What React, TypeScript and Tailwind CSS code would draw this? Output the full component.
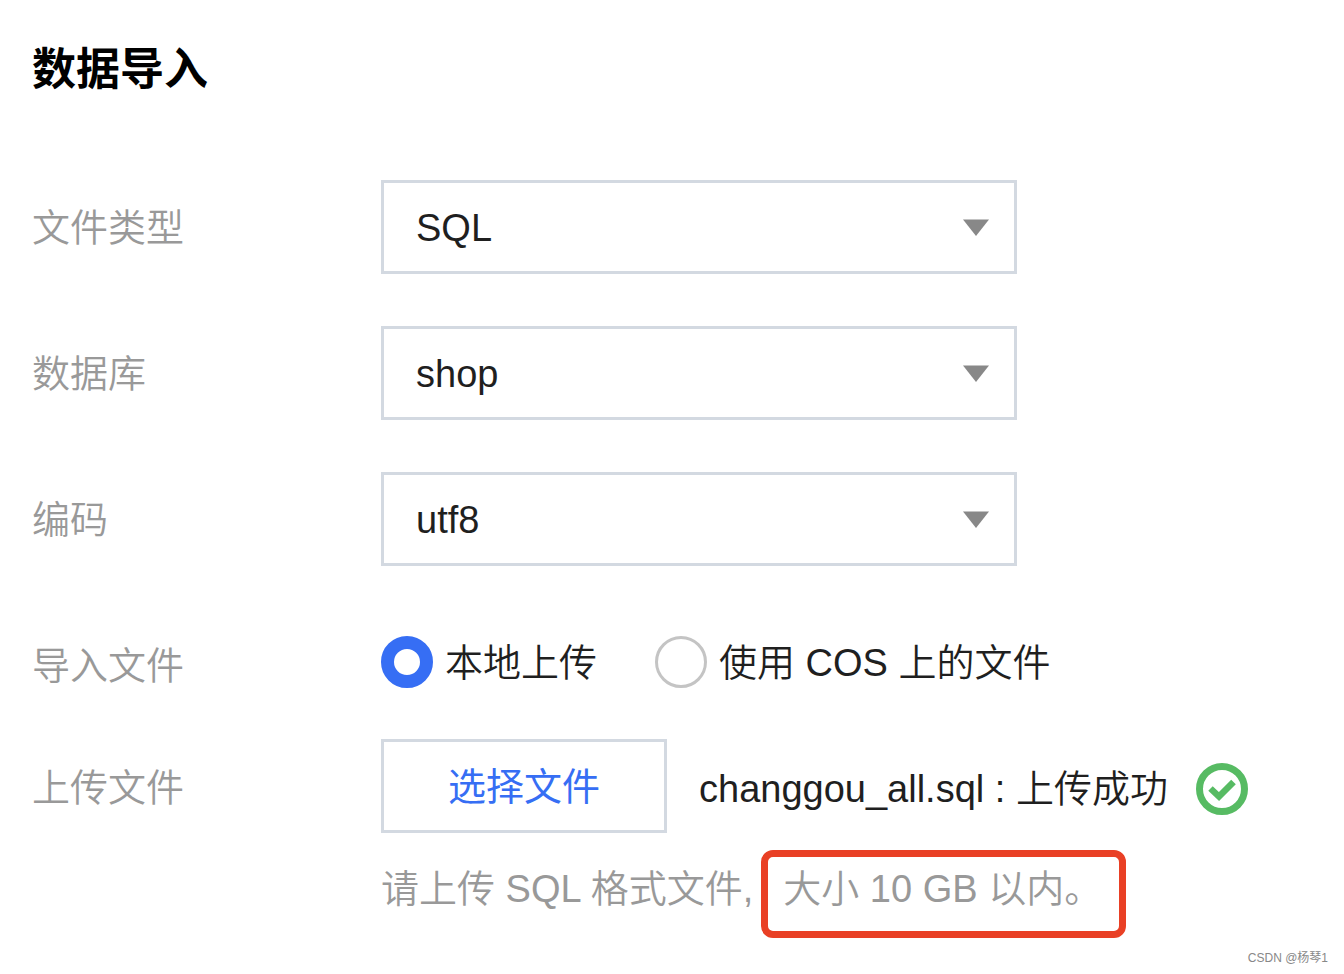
import { useState, type ReactNode } from "react";

const SELECTS = [
  { id: "file-type", label: "文件类型", options: ["SQL", "CSV"] },
  { id: "database", label: "数据库", options: ["shop"] },
  { id: "encoding", label: "编码", options: ["utf8", "gbk"] },
];

const SOURCES = [
  { value: "local", label: "本地上传" },
  { value: "cos", label: "使用 COS 上的文件" },
];

function Caption({ children }: { children: ReactNode }) {
  return <span className="text-[#999999] font-[350]">{children}</span>;
}

function SelectRow({ id, label, options }: { id: string; label: string; options: string[] }) {
  return (
    <div className="grid grid-cols-[349px_minmax(0,1fr)] items-center">
      <label htmlFor={id} className="pt-0.5">
        <Caption>{label}</Caption>
      </label>
      <div className="relative w-full max-w-[636px]">
        <select
          id={id}
          className="block h-[94px] w-full appearance-none border-3 border-[#d3d9e1] bg-white pt-0.5 pr-20 pl-8 text-[#1f1f1f] outline-none"
        >
          {options.map((option) => (
            <option key={option}>{option}</option>
          ))}
        </select>
        <svg
          viewBox="0 0 26 17"
          className="pointer-events-none absolute top-[39px] right-7 h-[17px] w-[26px] fill-[#888888]"
          aria-hidden="true"
        >
          <path d="M0 0.5h26L13 17z" />
        </svg>
      </div>
    </div>
  );
}

export default function App() {
  const [source, setSource] = useState("local");

  return (
    <main className="flex min-h-screen flex-col bg-white pt-[38px] pl-8 font-['Liberation_Sans','Noto_Sans_CJK_SC',sans-serif] text-[38px] leading-[56px] text-[#1f1f1f]">
      <h1 className="text-[44px] leading-[64px] font-bold text-black">数据导入</h1>

      <form className="mt-[78px] flex flex-col" onSubmit={(event) => event.preventDefault()}>
        <div className="flex flex-col gap-[52px]">
          {SELECTS.map((field) => (
            <SelectRow key={field.id} {...field} />
          ))}

          <div
            role="radiogroup"
            aria-labelledby="source-label"
            className="grid h-[94px] grid-cols-[349px_minmax(0,1fr)] items-center"
          >
            <span id="source-label" className="pt-0.5">
              <Caption>导入文件</Caption>
            </span>
            <div className="flex items-center gap-[58px] pb-1.5">
              {SOURCES.map(({ value, label }) => (
                <label key={value} className="flex items-center gap-3 font-[350] whitespace-nowrap">
                  <input
                    type="radio"
                    name="source"
                    value={value}
                    checked={source === value}
                    onChange={() => setSource(value)}
                    className="size-[52px] shrink-0 appearance-none rounded-full border-3 border-[#c4c4c4] bg-white checked:border-13 checked:border-[#366ef4]"
                  />
                  <span className="pt-0.5">{label}</span>
                </label>
              ))}
            </div>
          </div>
        </div>

        <div className="mt-[27px] grid grid-cols-[349px_minmax(0,1fr)] items-start">
          <span className="pt-0.5 leading-[94px]">
            <Caption>上传文件</Caption>
          </span>
          <div>
            <div className="flex items-center gap-8">
              <button
                type="button"
                className="h-[94px] w-[286px] shrink-0 border-3 border-[#d3d9e1] bg-white pt-0.5 text-[#366ef4]"
              >
                选择文件
              </button>
              <div className="flex items-center gap-7 pt-1.5 font-[350] whitespace-nowrap">
                <span>changgou_all.sql : 上传成功</span>
                <svg viewBox="0 0 52 52" className="size-[52px] shrink-0" fill="none" stroke="#57bb63" aria-hidden="true">
                  <circle cx="26" cy="26" r="22.5" strokeWidth="7" />
                  <path d="M14.5 25.5 23 33.5 37.5 19" strokeWidth="6.5" />
                </svg>
              </div>
            </div>

            <p className="mt-[17px] flex items-start font-[350] whitespace-nowrap text-[#999999]">
              <span className="pt-[11px]">请上传 SQL 格式文件,</span>
              <mark className="ml-2 rounded-xl border-7 border-[#e94025] bg-transparent pt-1 pr-[17px] pb-[14px] pl-[15px] text-[#999999]">
                大小 10 GB 以内。
              </mark>
            </p>
          </div>
        </div>
      </form>

      <footer className="mt-auto self-end pr-4 pb-1.5 text-[12px] leading-5 text-[#888888]">
        CSDN @杨琴1
      </footer>
    </main>
  );
}
